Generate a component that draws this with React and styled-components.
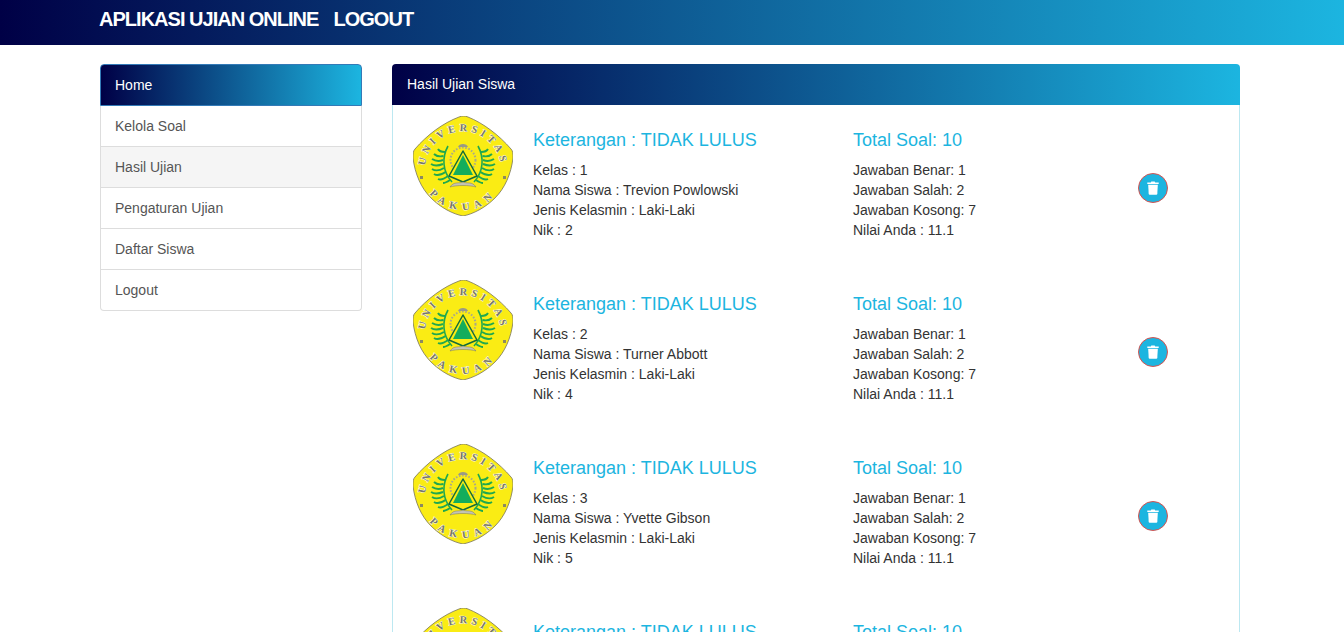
import React from "react";
import styled, { createGlobalStyle } from "styled-components";

const GRADIENT = "linear-gradient(to right, #000046, #1cb5e0)";

// the fourth row is cut off by the bottom of the window, only its headings show
const students = [
  { id: "a", kelas: 1, nama: "Trevion Powlowski", nik: 2 },
  { id: "b", kelas: 2, nama: "Turner Abbott", nik: 4 },
  { id: "c", kelas: 3, nama: "Yvette Gibson", nik: 5 },
  { id: "d" }
];

const menu = ["Kelola Soal", "Hasil Ujian", "Pengaturan Ujian", "Daftar Siswa", "Logout"];

const GlobalStyle = createGlobalStyle`
  html, body {
    margin: 0;
    height: 632px;
    overflow: hidden;
    background: #fff;
  }
  body {
    font-family: "Liberation Sans", Arial, sans-serif;
    font-size: 14px;
    line-height: 20px;
    color: #333;
  }
`;

const Navbar = styled.header`
  display: flex;
  gap: 15px;
  height: 45px;
  padding: 7px 0 0 99px;
  box-sizing: border-box;
  background: ${GRADIENT};
`;

const Brand = styled.a`
  font-size: 20px;
  line-height: 24px;
  font-weight: bold;
  letter-spacing: -0.98px;
  color: #fff;
`;

const Page = styled.main`
  display: flex;
  align-items: flex-start;
  gap: 30px;
  width: 1140px;
  margin: 19px 0 0 100px;
`;

const Sidebar = styled.nav`
  width: 262px;
  flex: none;
  border-radius: 4px;
`;

const SideHead = styled.div`
  height: 42px;
  padding: 10px 14px;
  box-sizing: border-box;
  border: 1px solid #337ab7;
  border-radius: 4px 4px 0 0;
  background: ${GRADIENT};
  color: #fff;
`;

const SideItem = styled.a`
  display: block;
  height: 41px;
  padding: 10px 14px;
  box-sizing: border-box;
  border: 1px solid #ddd;
  border-top: 0;
  border-radius: ${p => (p.$last ? "0 0 4px 4px" : "0")};
  background: ${p => (p.$active ? "#f5f5f5" : "#fff")};
  color: #555;
`;

const Panel = styled.section`
  width: 848px;
  flex: none;
`;

const PanelHead = styled.div`
  height: 41px;
  padding: 10px 15px;
  box-sizing: border-box;
  border-radius: 4px 4px 0 0;
  background: ${GRADIENT};
  color: #fff;
`;

const PanelBody = styled.div`
  border: 1px solid #bce8f1;
  border-top: 0;
  padding: 11px 20px 0;
`;

const Row = styled.article`
  display: grid;
  grid-template-columns: 120px 320px 285px 30px;
  height: 164px;
`;

const Logo = styled.svg`
  display: block;
  width: 100px;
  height: 100px;
`;

const Info = styled.div`
  padding-top: 12px;
`;

const Title = styled.h4`
  margin: 0 0 8px;
  font-size: 18px;
  line-height: 24px;
  font-weight: normal;
  color: #1cb5e0;
`;

const Line = styled.div`
  height: 20px;
`;

const DeleteButton = styled.button`
  display: flex;
  align-items: center;
  justify-content: center;
  width: 30px;
  height: 30px;
  margin-top: 57px;
  padding: 0;
  border: 1px solid #d9534f;
  border-radius: 50%;
  background: #1cb5e0;
`;

const LogoLetters = styled.text`
  font-family: "Liberation Serif", serif;
  font-size: 10.5px;
  font-weight: bold;
  fill: #77776a;
  stroke: #fffde0;
  stroke-width: 1px;
  paint-order: stroke;
  letter-spacing: ${p => p.$spacing}px;
`;

function Wing({ flip }) {
  return (
    <g transform={flip ? "translate(100 0) scale(-1 1)" : undefined} fill="none" stroke="#1fa84f">
      <path d="M35 30C29 41 29 55 39 66" strokeWidth="1.6" />
      <path
        d="M32 36C28 36 26 35 25 33M30.500 40C26 41 23 40 21 38M30 44C25 46 22 45 19 43M30 48C25 50 21 50 18 48M31 52C26 55 22 55 19 53M32.500 56C28 59 24 60 21 58M35 60C31 63 27 64 25 63M37 64C34 66 31 67 30 67"
        strokeWidth="1.9"
      />
    </g>
  );
}

function Emblem({ id }) {
  return (
    <Logo viewBox="0 0 100 100">
      <defs>
        <path id={`top-${id}`} d="M13 62A38 38 0 1 1 87 62" />
        <path id={`bottom-${id}`} d="M17.800 79A42 42 0 0 0 82.200 79" />
      </defs>
      <path
        d="M46 1C49 -0.300 52 -0.300 55 1C70 7 86 19 98 33C100 35 100 38 100 42C98 58 92 72 82 82C72 92 60 98 50 100C40 98 28 92 18 82C8 72 2 58 0 42C0 38 0 35 2 33C14 19 30 7 46 1Z"
        fill="#faec14"
        stroke="#77745a"
        strokeWidth="0.8"
      />
      <LogoLetters $spacing={3.7}>
        <textPath href={`#top-${id}`} startOffset="50%" textAnchor="middle">UNIVERSITAS</textPath>
      </LogoLetters>
      <LogoLetters $spacing={5.5}>
        <textPath href={`#bottom-${id}`} startOffset="50%" textAnchor="middle">PAKUAN</textPath>
      </LogoLetters>
      <rect x="7" y="60" width="3" height="3" fill="#8c8a60" />
      <rect x="90" y="60" width="3" height="3" fill="#8c8a60" />
      <Wing />
      <Wing flip />
      <circle cx="50" cy="44" r="12.500" fill="none" stroke="#a9a88a" strokeWidth="2" strokeDasharray="1.6 1.6" />
      <path d="M45 31C46 27 54 27 55 31Z" fill="#9a9a86" />
      <path d="M50 35L64 60L50 66L36 60Z" fill="#faec14" stroke="#146b3a" strokeWidth="1.500" strokeLinejoin="round" />
      <path d="M50 39L60 59H40Z" fill="#14ad5c" />
      <path d="M37 71C41 65 46 68 50 66C54 68 59 65 63 71C57 69 43 69 37 71Z" fill="#c4c4b4" stroke="#77775a" strokeWidth="0.5" />
    </Logo>
  );
}

function TrashIcon() {
  return (
    <svg width="12" height="14" viewBox="0 0 12 14">
      <path d="M4.300 0.500H7.700L8.200 1.500H11.700V3H0.300V1.500H3.800Z" fill="#fff" />
      <path d="M1.200 3.800H10.800L10.300 13C10.200 13.500 9.900 13.800 9.400 13.800H2.600C2.100 13.800 1.800 13.500 1.700 13Z" fill="#fff" />
    </svg>
  );
}

function StudentRow({ student }) {
  return (
    <Row>
      <Emblem id={student.id} />
      <Info>
        <Title>Keterangan : TIDAK LULUS</Title>
        {student.nama && (
          <>
            <Line>Kelas : {student.kelas}</Line>
            <Line>Nama Siswa : {student.nama}</Line>
            <Line>Jenis Kelasmin : Laki-Laki</Line>
            <Line>Nik : {student.nik}</Line>
          </>
        )}
      </Info>
      <Info>
        <Title>Total Soal: 10</Title>
        {student.nama && (
          <>
            <Line>Jawaban Benar: 1</Line>
            <Line>Jawaban Salah: 2</Line>
            <Line>Jawaban Kosong: 7</Line>
            <Line>Nilai Anda : 11.1</Line>
          </>
        )}
      </Info>
      <DeleteButton aria-label="Hapus">
        <TrashIcon />
      </DeleteButton>
    </Row>
  );
}

export default function App() {
  return (
    <>
      <GlobalStyle />
      <Navbar>
        <Brand>APLIKASI UJIAN ONLINE</Brand>
        <Brand>LOGOUT</Brand>
      </Navbar>
      <Page>
        <Sidebar>
          <SideHead>Home</SideHead>
          {menu.map((item, i) => (
            <SideItem key={item} $active={i === 1} $last={i === menu.length - 1}>
              {item}
            </SideItem>
          ))}
        </Sidebar>
        <Panel>
          <PanelHead>Hasil Ujian Siswa</PanelHead>
          <PanelBody>
            {students.map(s => (
              <StudentRow key={s.id} student={s} />
            ))}
          </PanelBody>
        </Panel>
      </Page>
    </>
  );
}
